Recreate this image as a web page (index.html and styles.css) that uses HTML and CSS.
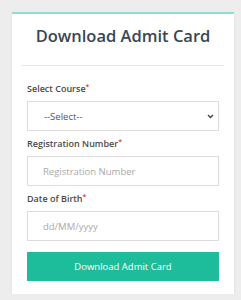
FILE: index.html
```html
<!DOCTYPE html>
<html lang="en">
<head>
    <meta charset="UTF-8">
    <meta name="viewport" content="width=device-width, initial-scale=1.0">
    <title>Download Admit Card</title>
    <link rel="stylesheet" href="styles.css">
</head>
<body>
    <div class="card">
        <h1 class="card-title">Download Admit Card</h1>
        <hr class="divider">
        <form class="admit-form">
            <div class="field">
                <label class="field-label">Select Course<span class="req">*</span></label>
                <div class="select-wrap">
                    <select class="control">
                        <option>--Select--</option>
                    </select>
                    <svg class="chevron" width="7" height="5" viewBox="0 0 7 5">
                        <path d="M1 1l2.5 2.5L6 1" fill="none" stroke="#444" stroke-width="1.4"/>
                    </svg>
                </div>
            </div>
            <div class="field">
                <label class="field-label">Registration Number<span class="req">*</span></label>
                <input class="control" type="text" placeholder="Registration Number">
            </div>
            <div class="field">
                <label class="field-label">Date of Birth<span class="req">*</span></label>
                <input class="control" type="text" placeholder="dd/MM/yyyy">
            </div>
            <button class="submit-btn" type="button">Download Admit Card</button>
        </form>
    </div>
</body>
</html>
```

FILE: styles.css
```css
* {
    box-sizing: border-box;
    margin: 0;
    padding: 0;
}

body {
    background: #ededed;
    font-family: 'Open Sans', 'Liberation Sans', sans-serif;
    padding: 12px 7px 0 12px;
}

.card {
    width: 222px;
    background: #fff;
    border-top: 2px solid #8fe0cc;
    box-shadow: 0 1px 2px rgba(0, 0, 0, 0.08);
    padding: 10px 0 13px;
}

.card-title {
    font-size: 16.5px;
    font-weight: 600;
    line-height: 24px;
    color: #3a4651;
    text-align: center;
    padding-bottom: 17px;
}

.divider {
    border: none;
    border-top: 1px solid #e6e6e6;
    margin: 0 10px;
}

.admit-form {
    padding: 16px 15px 0;
}

.field {
    margin-bottom: 6px;
}

.field-label {
    display: block;
    font-size: 9px;
    font-weight: 600;
    line-height: 13px;
    color: #4a4a4a;
    margin-bottom: 6px;
}

.req {
    color: #e53935;
    font-size: 7px;
    vertical-align: top;
    line-height: 9px;
}

.control {
    display: block;
    width: 100%;
    height: 30px;
    border: 1px solid #dcdcdc;
    border-radius: 0;
    background: #fff;
    font-family: inherit;
    font-size: 9.5px;
    color: #555;
    padding: 0 15px;
    outline: none;
}

.control::placeholder {
    color: #a9a9a9;
}

.select-wrap {
    position: relative;
}

select.control {
    appearance: none;
    -webkit-appearance: none;
    padding-left: 16px;
    color: #555;
}

.chevron {
    position: absolute;
    right: 5px;
    top: 13px;
}

.submit-btn {
    display: block;
    width: 100%;
    height: 29px;
    margin-top: 11px;
    border: none;
    background: #1dbc9b;
    color: #fff;
    font-family: inherit;
    font-size: 9.5px;
    cursor: pointer;
}
```
